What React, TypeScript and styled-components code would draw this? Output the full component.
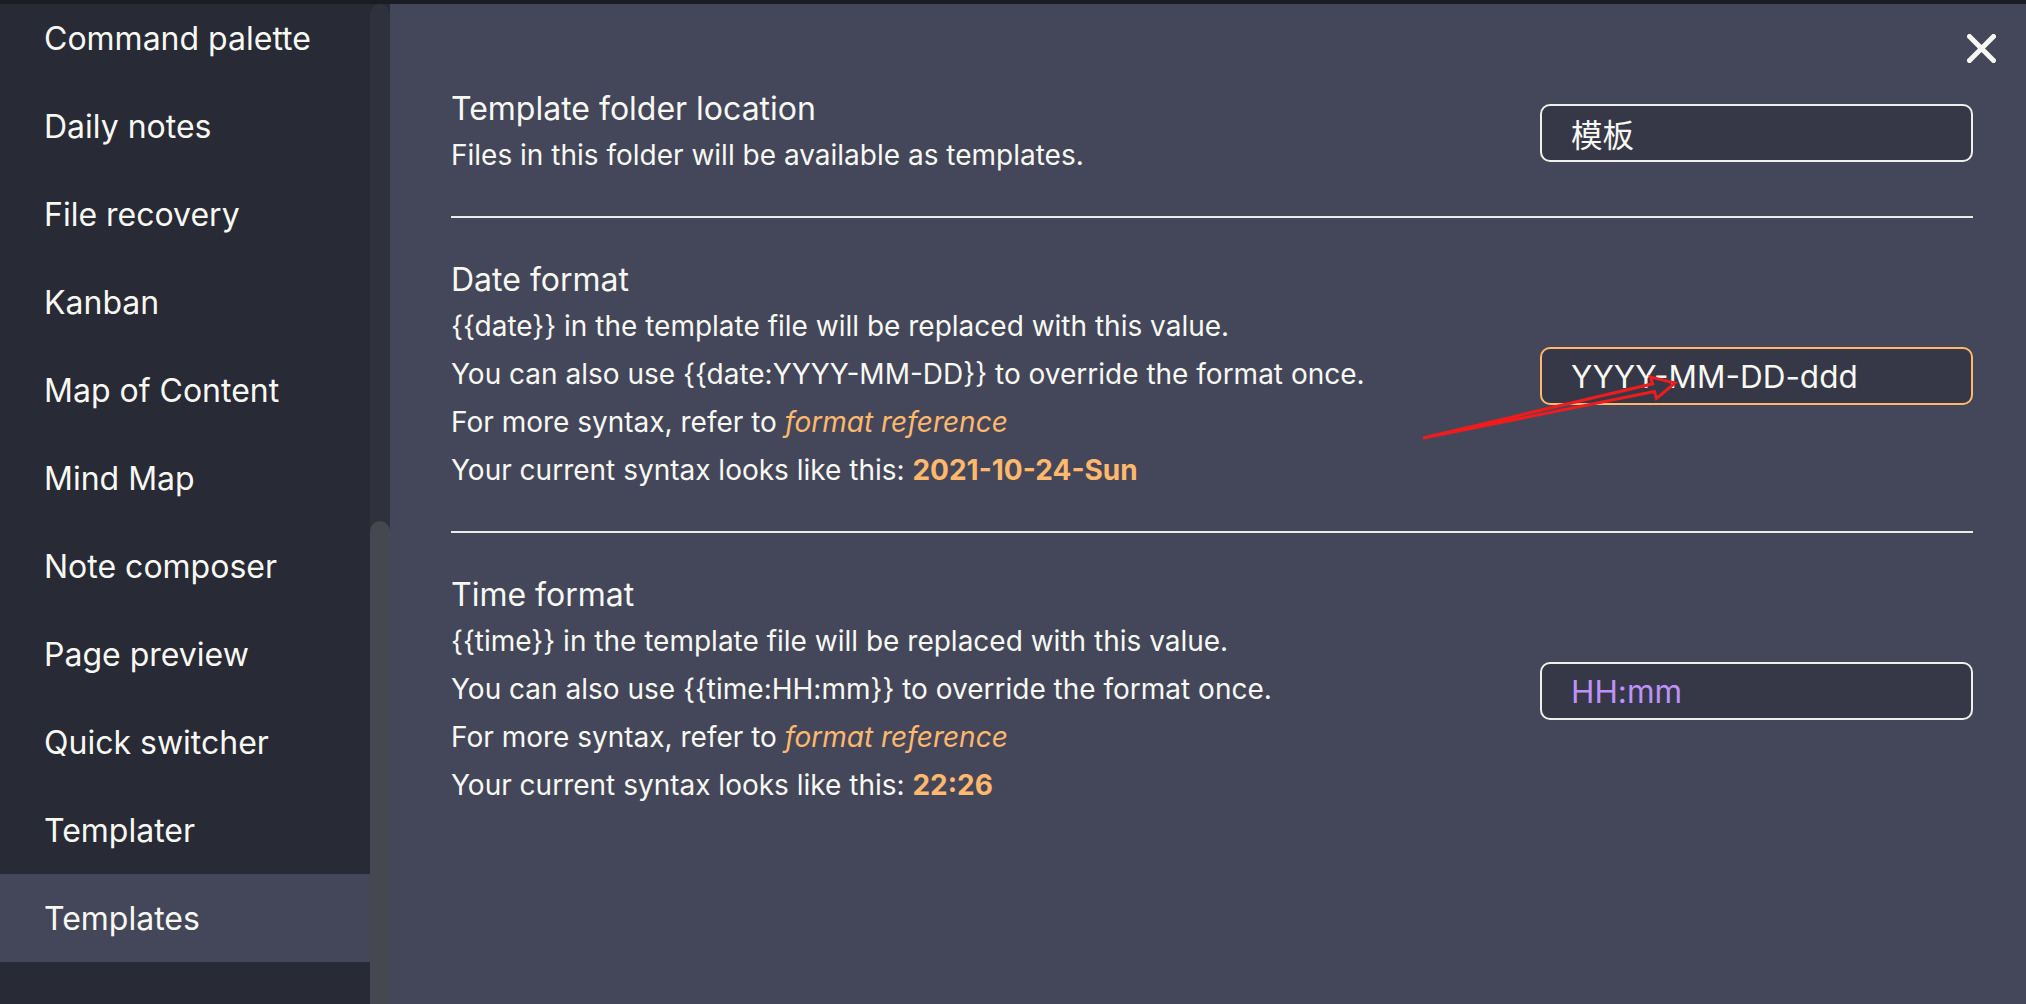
import React from "react";
import styled, { createGlobalStyle } from "styled-components";

const GlobalStyle = createGlobalStyle`
  html, body { margin: 0; padding: 0; background: #44475a; }
  body {
    font-family: Inter, "Noto Sans CJK SC", sans-serif;
    -webkit-font-smoothing: antialiased;
  }
  * { box-sizing: border-box; }
`;

const Page = styled.div`
  position: relative;
  width: 2026px;
  height: 1004px;
  overflow: hidden;
  display: flex;
  flex-direction: column;
  background: #44475a;
`;

const TopStrip = styled.div`
  height: 4px;
  flex: none;
  background: #1c1d24;
`;

const Body = styled.div`
  flex: 1;
  display: flex;
  min-height: 0;
`;

const Sidebar = styled.nav`
  width: 370px;
  flex: none;
  background: #282a36;
  overflow: hidden;
`;

const NavList = styled.ul`
  list-style: none;
  margin: -10px 0 0;
  padding: 0;
`;

const NavItem = styled.li<{ $active?: boolean }>`
  height: 88px;
  display: flex;
  align-items: center;
  padding-left: 44px;
  font-size: 32px;
  color: #f8f8f2;
  background: ${(p) => (p.$active ? "#44475a" : "transparent")};
`;

const ScrollTrack = styled.div`
  width: 20px;
  flex: none;
  display: flex;
  flex-direction: column;
  background: #282a36;
`;

const Rail = styled.div`
  flex: 1;
  display: flex;
  flex-direction: column;
  border-radius: 10px 10px 0 0;
  background: #2f313c;
`;

const Thumb = styled.div<{ $offset: number }>`
  margin-top: ${(p) => p.$offset}px;
  flex: 1;
  border-radius: 10px 10px 0 0;
  background: #46484f;
`;

const Main = styled.main`
  position: relative;
  flex: 1;
  padding: 43px 53px 0 61px;
  background: #44475a;
`;

const CloseButton = styled.button`
  position: absolute;
  top: 30px;
  right: 30px;
  width: 29px;
  height: 29px;
  padding: 0;
  border: none;
  background: transparent;
  display: flex;
  cursor: pointer;
`;

const SettingItem = styled.div<{ $first?: boolean }>`
  display: flex;
  align-items: center;
  gap: 40px;
  padding: 40px 0 37px;
  border-top: ${(p) => (p.$first ? "none" : "2px solid #ecece6")};
`;

const Info = styled.div`
  flex: 1;
  min-width: 0;
`;

const Name = styled.div`
  font-size: 32px;
  line-height: 44px;
  color: #f8f8f2;
`;

const Desc = styled.div`
  font-size: 28px;
  line-height: 48px;
  color: #f8f8f2;
`;

const Link = styled.a`
  color: #ffb86c;
  font-style: italic;
  text-decoration: none;
`;

const Value = styled.strong`
  color: #ffb86c;
  font-weight: 700;
`;

const TextInput = styled.input<{ $focused?: boolean }>`
  width: 433px;
  height: 58px;
  border: 2px solid ${(p) => (p.$focused ? "#ffb86c" : "#f0f0ea")};
  border-radius: 10px;
  background: #363848;
  color: #f8f8f2;
  font-family: Inter, "Noto Sans CJK SC", sans-serif;
  font-size: 31.5px;
  padding: 0 29px;
  outline: none;
  &::placeholder {
    color: #bd93f9;
    opacity: 1;
  }
`;

const Annotation = styled.svg`
  position: absolute;
  left: 0;
  top: 0;
  pointer-events: none;
`;

const navItems = [
  "Command palette",
  "Daily notes",
  "File recovery",
  "Kanban",
  "Map of Content",
  "Mind Map",
  "Note composer",
  "Page preview",
  "Quick switcher",
  "Templater",
  "Templates",
];

export default function App() {
  return (
    <>
      <GlobalStyle />
      <Page>
        <TopStrip />
        <Body>
          <Sidebar>
            <NavList>
              {navItems.map((n) => (
                <NavItem key={n} $active={n === "Templates"}>
                  {n}
                </NavItem>
              ))}
            </NavList>
          </Sidebar>
          <ScrollTrack>
            <Rail>
              <Thumb $offset={517} />
            </Rail>
          </ScrollTrack>
          <Main>
            <CloseButton aria-label="Close">
              <svg width="29" height="29" viewBox="0 0 29 29">
                <path
                  d="M2.5 2.5 L26.5 26.5 M26.5 2.5 L2.5 26.5"
                  stroke="#f8f8f2"
                  strokeWidth="5"
                  strokeLinecap="square"
                />
              </svg>
            </CloseButton>

            <SettingItem $first>
              <Info>
                <Name>Template folder location</Name>
                <Desc>Files in this folder will be available as templates.</Desc>
              </Info>
              <TextInput defaultValue="模板" />
            </SettingItem>

            <SettingItem>
              <Info>
                <Name>Date format</Name>
                <Desc>{"{{date}}"} in the template file will be replaced with this value.</Desc>
                <Desc>You can also use {"{{date:YYYY-MM-DD}}"} to override the format once.</Desc>
                <Desc>
                  For more syntax, refer to <Link>format reference</Link>
                </Desc>
                <Desc>
                  Your current syntax looks like this: <Value>2021-10-24-Sun</Value>
                </Desc>
              </Info>
              <TextInput $focused defaultValue="YYYY-MM-DD-ddd" />
            </SettingItem>

            <SettingItem>
              <Info>
                <Name>Time format</Name>
                <Desc>{"{{time}}"} in the template file will be replaced with this value.</Desc>
                <Desc>You can also use {"{{time:HH:mm}}"} to override the format once.</Desc>
                <Desc>
                  For more syntax, refer to <Link>format reference</Link>
                </Desc>
                <Desc>
                  Your current syntax looks like this: <Value>22:26</Value>
                </Desc>
              </Info>
              <TextInput placeholder="HH:mm" />
            </SettingItem>
          </Main>
        </Body>
        <Annotation width="2026" height="1004" viewBox="0 0 2026 1004">
          <polygon
            points="1423,438 1652.6,383.8 1650.5,377 1675,383 1656.5,398.5 1654.4,391.6"
            fill="none"
            stroke="#ee1c1c"
            strokeWidth="3"
            strokeLinejoin="miter"
          />
        </Annotation>
      </Page>
    </>
  );
}
